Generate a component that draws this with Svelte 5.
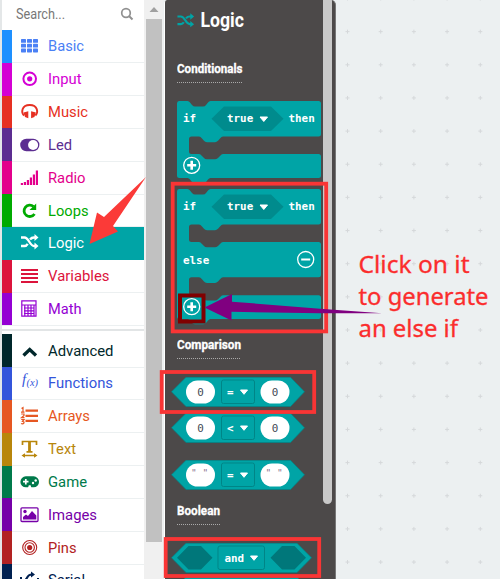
<script>
  const main = [
    { name: 'Basic', color: '#1e90ff', text: '#4a80f5', w: 36 },
    { name: 'Input', color: '#d400d4', w: 33.5 },
    { name: 'Music', color: '#e63022', w: 40 },
    { name: 'Led', color: '#5c2d91', w: 24 },
    { name: 'Radio', color: '#e3008c', w: 37.5 },
    { name: 'Loops', color: '#00aa00', w: 40.5 },
    { name: 'Logic', color: '#00a4a6', w: 36, active: true },
    { name: 'Variables', color: '#dc143c', w: 61.5 },
    { name: 'Math', color: '#9400d3', w: 33.5 }
  ];
  const advanced = [
    { name: 'Advanced', color: '#00272b', w: 65.5 },
    { name: 'Functions', color: '#3455db', w: 65 },
    { name: 'Arrays', color: '#e65722', w: 42 },
    { name: 'Text', color: '#b8860b', w: 28 },
    { name: 'Game', color: '#007a4b', w: 39 },
    { name: 'Images', color: '#7600a8', w: 49 },
    { name: 'Pins', color: '#b22222', w: 28.5 },
    { name: 'Serial', color: '#002050', w: 37 }
  ];

  // rows: list of arm tops/bottoms, relative to the top left of the block
  function statement(rows) {
    let d = 'M2 0H10.5Q12 0 13 1.5L15 4Q16.5 5.5 18 5.5H26Q28 5.5 29 4L31 1.5Q32 0 33.5 0H141.5Q144 0 144 2.5';
    rows.forEach(([top, bottom], i) => {
      d += `V${bottom - 2.5}Q144 ${bottom} 141.5 ${bottom}`;
      if (i < rows.length - 1) {
        const next = rows[i + 1][0];
        d += `H46Q44.5 ${bottom} 43 ${bottom + 2}L41 ${bottom + 4.3}Q39.5 ${bottom + 5.7} 38 ${bottom + 5.7}H30Q28 ${bottom + 5.7} 27 ${bottom + 4.3}L25 ${bottom + 2}Q23.5 ${bottom} 22 ${bottom}H14.5Q12 ${bottom} 12 ${bottom + 2.5}`;
        d += `V${next - 2.5}Q12 ${next} 14.5 ${next}H22Q23.5 ${next} 25 ${next + 2}L27 ${next + 4}Q28 ${next + 5.3} 30 ${next + 5.3}H38Q39.5 ${next + 5.3} 41 ${next + 4}L43 ${next + 2}Q44.5 ${next} 46 ${next}H141.5Q144 ${next} 144 ${next + 2.5}`;
      } else {
        d += `H33.5Q32 ${bottom} 31 ${bottom + 1.5}L29 ${bottom + 4}Q28 ${bottom + 5.3} 26 ${bottom + 5.3}H18Q16.5 ${bottom + 5.3} 15 ${bottom + 4}L13 ${bottom + 1.5}Q12 ${bottom} 10.5 ${bottom}H2.5Q0 ${bottom} 0 ${bottom - 2.5}V2.5Q0 0 2 0Z`;
      }
    });
    return d;
  }
  const ifPath = statement([[0, 35.5], [53, 77]]);
  const elsePath = statement([[0, 35.5], [53, 88.3], [106.3, 130]]);
  const comparisons = [
    { op: '=', v: '0', h: 36 },
    { op: '<', v: '0', h: 46.5 },
    { op: '=', v: '" "', h: 41 }
  ];
</script>

{#snippet shuffle()}
  <path d="M1 5H4.5C9 5 9.500 13.500 14 13.500H16M1 13.500H4.500C6 13.500 7 12.500 7.700 11.300M10 7C11 5.700 12 5 14 5H16" fill="none" stroke="currentColor" stroke-width="2.300" />
  <path d="M14.500 1.500L18.500 5L14.500 8.500ZM14.500 10L18.500 13.500L14.500 17Z" fill="currentColor" />
{/snippet}

{#snippet icon(name)}
  <svg class="icon" width="20" height="20" viewBox="0 0 20 20">
    {#if name === 'Basic'}
      {#each [3.5, 8.3, 13.1] as y}{#each [1, 7, 13] as x}<rect {x} {y} width="5" height="3.800" rx=".6" fill="currentColor" />{/each}{/each}
    {:else if name === 'Input'}
      <circle cx="9.700" cy="10.300" r="6.300" fill="none" stroke="currentColor" stroke-width="2" /><circle cx="9.700" cy="10.300" r="2.600" fill="currentColor" />
    {:else if name === 'Music'}
      <path d="M4 14C1 11 1.500 3.500 9.700 3.500S18.400 11 15.400 14" fill="none" stroke="currentColor" stroke-width="1.900" />
      <path d="M3.500 11L8.300 9.700V16.800L5 15.500ZM15.900 11L11.100 9.700V16.800L14.400 15.500Z" fill="currentColor" />
    {:else if name === 'Led'}
      <rect x=".2" y="4.200" width="19.200" height="12.500" rx="6.200" fill="currentColor" /><circle cx="13.100" cy="10.450" r="5" fill="#fff" />
    {:else if name === 'Radio'}
      {#each [2, 3, 5, 7.5, 10.5, 14.5] as h, i}<rect x={0.8 + i * 3} y={17.5 - h} width="2.200" height={h} fill="currentColor" />{/each}
    {:else if name === 'Loops'}
      <path d="M13.500 6A5.700 5.700 0 1 0 14.500 13.500" fill="none" stroke="currentColor" stroke-width="2.800" /><path d="M16.200 3V9.500H9.500Z" fill="currentColor" />
    {:else if name === 'Logic'}
      {@render shuffle()}
    {:else if name === 'Variables'}
      <path d="M1 4.500H18M1 8.500H18M1 12.500H18M1 16.500H18" stroke="currentColor" stroke-width="2" />
    {:else if name === 'Math'}
      <path d="M1.800 2.300H16V17.700H1.800ZM1.800 6.500H16M4 9.500H14M4 12.300H14M4 15H14M4.800 7V17M8 7V17M11 7V17M14 7V17" fill="none" stroke="currentColor" stroke-width="1.200" />
    {:else if name === 'Advanced'}
      <path d="M3.500 15L9.700 9L16 15" fill="none" stroke="currentColor" stroke-width="3.300" />
    {:else if name === 'Functions'}
      <text x="2" y="11.500" font-family="Liberation Serif, serif" font-style="italic" font-size="15" fill="currentColor">f</text>
      <text x="6.500" y="13.500" font-family="Liberation Serif, serif" font-style="italic" font-size="11" textLength="11.500" lengthAdjust="spacingAndGlyphs" fill="currentColor">(x)</text>
    {:else if name === 'Arrays'}
      <path d="M5.500 5.200H18M5.500 10.300H18M5.500 15.300H18" stroke="currentColor" stroke-width="2.300" />
      <path d="M1.500 3L3 2V6.500M1 6.600H4.500M1.200 8.500H4V10L1.500 12.200H4.500M1.200 14H4L2.500 15.800Q4.300 16 4 17.300Q3 18.800 1 18" fill="none" stroke="currentColor" stroke-width="1.200" />
    {:else if name === 'Text'}
      <path d="M2.500 6.500V3H16.500V6.500M6.500 13.300H12.500" fill="none" stroke="currentColor" stroke-width="1.700" /><path d="M9.500 3V13" stroke="currentColor" stroke-width="2.800" />
      <path d="M3 17H16" stroke="currentColor" stroke-width="1.500" /><path d="M1.500 17L5 14.800V19.200ZM17.500 17L14 14.800V19.200Z" fill="currentColor" />
    {:else if name === 'Game'}
      <rect x=".4" y="4.800" width="18.600" height="11" rx="5.400" fill="currentColor" /><path d="M7.800 17L8.800 13.800H10.600L11.600 17Z" fill="#fff" />
      <path d="M3 10.200H8.500M5.800 7.500V13" stroke="#fff" stroke-width="1.700" /><circle cx="13" cy="11.500" r="1.200" fill="#fff" /><circle cx="15.700" cy="9" r="1.200" fill="#fff" />
    {:else if name === 'Images'}
      <rect x="1" y="3.300" width="17" height="13.700" rx="1" fill="none" stroke="currentColor" stroke-width="1.300" /><circle cx="5" cy="7" r="1.700" fill="currentColor" /><path d="M3 15V12.500L6 10L8 11.500L12 6.500L16.300 11V15Z" fill="currentColor" />
    {:else if name === 'Pins'}
      <g fill="none" stroke="currentColor" stroke-width="1.100"><circle cx="9.700" cy="10" r="7" /><circle cx="9.700" cy="10" r="4.700" /></g><circle cx="9.700" cy="10" r="2.600" fill="currentColor" />
    {:else}
      <path d="M0 8.500H2M5 10C8 10 6 5 12 5M17 9.500H19" fill="none" stroke="currentColor" stroke-width="2.200" /><path d="M11 2L15 5L11 8Z" fill="currentColor" />
    {/if}
  </svg>
{/snippet}

{#snippet row(item)}
  <div class="row" class:active={item.active} style:color={item.active ? '#fff' : item.text ?? item.color}>
    <span class="strip" style:background={item.color}></span>
    {@render icon(item.name)}
    <svg class="label" width="80" height="22"><text x="0" y="15.800" textLength={item.w} lengthAdjust="spacingAndGlyphs" fill="currentColor">{item.name}</text></svg>
  </div>
{/snippet}

{#snippet heading(text, w)}
  <svg width="80" height="26"><text class="head" x="0" y="13" textLength={w} lengthAdjust="spacingAndGlyphs">{text}</text><path d="M0 22.500H{w}" stroke="#aaa" stroke-width="1" stroke-dasharray="1 1" /></svg>
{/snippet}

{#snippet plus(x, y)}
  <g transform="translate({x} {y})"><circle r="8" fill="none" stroke="#fff" stroke-width="1.300" /><path d="M-4.500 0H4.500M0 -4.500V4.500" stroke="#fff" stroke-width="2.600" /></g>
{/snippet}

{#snippet condition()}
  <text x="6" y="20.500">if</text>
  <path d="M34.500 17.700L47 5.500H94L106.500 17.700L94 30H47Z" fill="#008b8d" />
  <text x="50" y="20.500">true</text><path d="M83 16H90.500L86.800 20.500Z" fill="#fff" stroke="#fff" stroke-linejoin="round" />
  <text x="111.500" y="20.500">then</text>
{/snippet}

<main>
  <div class="toolbox">
    <div class="search">
      <svg width="130" height="30"><text x="2" y="18.500" textLength="49" lengthAdjust="spacingAndGlyphs">Search...</text><circle cx="112" cy="13" r="4.300" fill="none" stroke="#909090" stroke-width="1.700" /><path d="M115 16L118.500 19.500" stroke="#909090" stroke-width="2" /></svg>
    </div>
    {#each main as item}{@render row(item)}{/each}
    <div class="separator"></div>
    {#each advanced as item}{@render row(item)}{/each}
  </div>
  <div class="scroll"><svg width="19" height="19"><path d="M5.500 12L10 7L14.500 12Z" fill="#a0a0a0" /></svg><div class="thumb"></div></div>
  <div class="flyout">
    <div class="blocks">
      <div class="title">
        <svg width="90" height="36"><g color="#00a4a6" transform="translate(-.5 12) scale(.95 .9)">{@render shuffle()}</g><text x="23.500" y="27" textLength="43.500" lengthAdjust="spacingAndGlyphs">Logic</text></svg>
      </div>
      <div class="section first">{@render heading('Conditionals', 65.5)}</div>
      <svg class="code" width="146" height="88.500">
        <path d={ifPath} fill="#00a4a6" />{@render condition()}{@render plus(14.7, 64.3)}
      </svg>
      <svg class="code" width="146" height="148">
        <path d={elsePath} fill="#00a4a6" />{@render condition()}
        <text x="6" y="75">else</text>
        <circle cx="128.700" cy="70.500" r="8" fill="none" stroke="#fff" stroke-width="1.300" /><path d="M124.200 70.500H133.200" stroke="#fff" stroke-width="2" />
        {@render plus(14.7, 117.7)}
      </svg>
      <div class="section comparison">{@render heading('Comparison', 64)}</div>
      {#each comparisons as c}
        <svg class="code wide" width="142" height={c.h}>
          <path d="M.5 14.800L15 .3H119.500L133.500 14.800L119.500 29.500H15Z" fill="#00a4a6" stroke="#008587" stroke-width=".7" />
          <rect x="15" y="3.500" width="29" height="23" rx="11.500" fill="#fff" /><rect x="89.500" y="3.500" width="29" height="23" rx="11.500" fill="#fff" />
          <rect x="50.500" y="3" width="33" height="23.500" rx="2" fill="#00a4a6" stroke="#008587" />
          {#if c.v === '0'}
            <text class="num" x="29.500" y="19">0</text><text class="num" x="104" y="19">0</text>
          {:else}
            <text class="quote" x="20" y="15.500">" "</text><text class="quote" x="94.500" y="15.500">" "</text>
          {/if}
          <text x="56" y="19">{c.op}</text><path d="M69.500 13H76.500L73 17.300Z" fill="#fff" stroke="#fff" stroke-linejoin="round" />
        </svg>
      {/each}
      <div class="section boolean">{@render heading('Boolean', 43)}</div>
      <svg class="code wide" width="142" height="34.500">
        <path d="M.5 14.800L15 .3H126L140.500 14.800L126 29.500H15Z" fill="#00a4a6" stroke="#008587" stroke-width=".7" />
        <path d="M6 14.800L17.500 3H30L41.500 14.800L30 26.500H17.500ZM99.500 14.800L111 3H123.500L135 14.800L123.500 26.500H111Z" fill="#00777a" />
        <rect x="47" y="3" width="46.500" height="23.500" rx="2" fill="#00a4a6" stroke="#008587" />
        <text x="53.500" y="18.500">and</text><path d="M79.500 13H86.500L83 17.300Z" fill="#fff" stroke="#fff" stroke-linejoin="round" />
      </svg>
      <svg class="wide" width="142" height="30"><path d="M.5 14.500L15 0H126L140.500 14.500L126 29.500H15Z" fill="#00a4a6" /></svg>
    </div>
    <div class="flybar"></div>
  </div>
  <svg class="workspace" width="164" height="579">
    {#each Array(18) as _, r}{#each Array(5) as _, c}
      <path d="M{9.5 + c * 33.2} {-1.5 + r * 33.15}h4m-2 -2v4" stroke="#d5d8da" stroke-width="1" />
    {/each}{/each}
  </svg>
  <svg class="notes" width="500" height="579">
    <g fill="none" stroke="#f93535" stroke-width="3.800">
      <rect x="172.700" y="183.700" width="153.500" height="147.700" />
      <rect x="161.700" y="372" width="152.500" height="40" />
      <rect x="165.700" y="539" width="153.500" height="37" />
    </g>
    <rect x="180" y="295.500" width="23.500" height="26" fill="none" stroke="#800000" stroke-width="4" />
    <path d="M204.500 307.500L232 294V301.700L320 308.700L382 313.300L320 313.300L231.500 311.800V320.500Z" fill="#800080" />
    <path d="M89.500 244L97 212.500L104 217L146 177L113 226L118 231.500Z" fill="#fb3a38" />
    <g fill="#fb2d2d" stroke="#fb2d2d" stroke-width=".3" font-family="Noto Sans, sans-serif" font-size="23.800">
      <text x="358.500" y="272.800" textLength="111" lengthAdjust="spacingAndGlyphs">Click on it</text>
      <text x="358.500" y="304.600" textLength="130" lengthAdjust="spacingAndGlyphs">to generate</text>
      <text x="358.500" y="336.500" textLength="99.500" lengthAdjust="spacingAndGlyphs">an else if</text>
    </g>
  </svg>
</main>

<style>
  :global(body) { margin: 0; overflow: hidden; }
  main { position: relative; display: flex; width: 500px; height: 579px; overflow: hidden; background: #ecf0f1; font-family: Roboto, sans-serif; }
  svg { display: block; flex: none; }
  .toolbox { width: 142px; flex: none; border-left: 2px solid #e4e7e8; background: #fff; }
  .search { height: 30.5px; padding-left: 12px; }
  .search text { font-size: 14px; fill: #777; }
  .row { display: flex; align-items: center; height: 32.83px; box-sizing: border-box; border-bottom: 1px solid #ecf0f1; }
  .row.active { background: #00a4a6; border-color: #00a4a6; }
  .strip { width: 10px; height: 32.83px; flex: none; }
  .icon { margin-left: 8px; overflow: visible; transform: translateY(-0.5px); }
  .label { margin-left: 8px; overflow: visible; }
  .label text { font-size: 15.5px; }
  .separator { height: 8.8px; box-sizing: border-box; border-top: 3px solid #fff; border-bottom: 4px solid #fff; background: #e2e5e6; }
  .scroll { width: 19px; flex: none; background: #f0f0f0; }
  .thumb { width: 16px; height: 523px; margin-left: 2px; background: #c1c1c1; }
  .flyout { display: flex; width: 172px; box-sizing: border-box; flex: none; border-left: 1px solid #fff; border-right: 1px solid #777; background: #4c4949; border-radius: 3px 5px 0 0; margin-left: 1px; overflow: hidden; }
  .blocks { width: 158px; flex: none; padding-left: 12px; box-sizing: border-box; }
  .title { height: 59.5px; }
  .title text { font-size: 19.5px; font-weight: 700; fill: #fff; }
  .head { font-size: 13px; font-weight: 700; fill: #fff; stroke: #fff; stroke-width: 0.3px; }
  .first { height: 41px; }
  .comparison { height: 41px; margin-top: -1px; }
  .boolean { height: 41px; margin-top: 1px; }
  .code text { font: bold 10.9px "DejaVu Sans Mono", monospace; fill: #fff; }
  .code .num { font-weight: 400; fill: #444a55; text-anchor: middle; }
  .code .quote { font-weight: 400; fill: #8c7390; font-size: 9.5px; }
  .wide { margin-left: -6px; }
  .flybar { width: 9px; height: 508px; margin-top: -4px; border-radius: 5px; background: #c9c9c9; }
  .workspace { overflow: hidden; }
  .notes { position: absolute; left: 0; top: 0; pointer-events: none; }
</style>
